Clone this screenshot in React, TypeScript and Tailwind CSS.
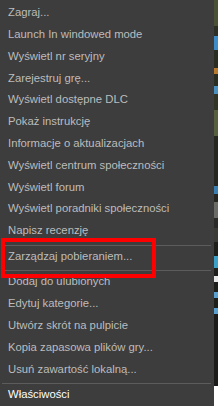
import React from "react";

const firstGroup = [
  "Zagraj...",
  "Launch In windowed mode",
  "Wyświetl nr seryjny",
  "Zarejestruj grę...",
  "Wyświetl dostępne DLC",
  "Pokaż instrukcję",
  "Informacje o aktualizacjach",
  "Wyświetl centrum społeczności",
  "Wyświetl forum",
  "Wyświetl poradniki społeczności",
  "Napisz recenzję",
];

const thirdGroup = [
  "Dodaj do ulubionych",
  "Edytuj kategorie...",
  "Utwórz skrót na pulpicie",
  "Kopia zapasowa plików gry...",
  "Usuń zawartość lokalną...",
];

// strip of the game art visible to the right of the menu
const strip: [number, string][] = [
  [26, "#4a5236"],
  [10, "#2c3024"],
  [14, "#3d8cc8"],
  [18, "#2a2e22"],
  [6, "#b87a2e"],
  [12, "#2a2e22"],
  [8, "#4a90c0"],
  [16, "#303526"],
  [26, "#56603f"],
  [50, "#26281f"],
  [8, "#3a7fb0"],
  [8, "#262620"],
  [16, "#6a6a66"],
  [10, "#2a2a28"],
  [14, "#3a3a36"],
  [14, "#1e1f1b"],
  [12, "#3aa0c8"],
  [8, "#1e1f1b"],
  [6, "#e8e8e8"],
  [10, "#1e1f1b"],
  [6, "#5aa0d0"],
  [10, "#1e1f1b"],
  [6, "#5aa0d0"],
  [72, "#1c1d1a"],
];

const Item = ({ label, h = "h-[22px]", white = false }: { label: string; h?: string; white?: boolean }) => (
  <div
    className={`${h} flex items-center pl-[8px] whitespace-nowrap ${
      white ? "text-white" : "text-[#bcbcbc]"
    }`}
  >
    {label}
  </div>
);

const Separator = () => <div className="h-px mt-[2px] ml-[2px] mr-[3px] bg-[#5c5c5c]" />;

export default function App() {
  return (
    <div
      className="relative flex w-[218px] h-[406px] overflow-hidden text-[11.3px] leading-none"
      style={{ fontFamily: '"Liberation Sans", Arial, sans-serif' }}
    >
      <div className="w-[214px] h-full bg-[#3d3d3d] flex flex-col pt-[2px]">
        {firstGroup.map((label) => (
          <Item key={label} label={label} h="h-[21.8px]" />
        ))}
        <div className="h-px mt-[3px] ml-[2px] mr-[3px] bg-[#5c5c5c]" />
        <Item label="Zarządzaj pobieraniem..." />
        <Separator />
        {thirdGroup.map((label) => (
          <Item key={label} label={label} />
        ))}
        <Separator />
        <Item label="Właściwości" white />
      </div>
      <div className="flex-1 flex flex-col">
        {strip.map(([hgt, color], i) => (
          <div key={i} style={{ height: hgt, background: color }} />
        ))}
      </div>
      <div className="absolute left-[1px] top-[238px] w-[155px] h-[40px] border-[4px] border-[#ff0000]" />
    </div>
  );
}
